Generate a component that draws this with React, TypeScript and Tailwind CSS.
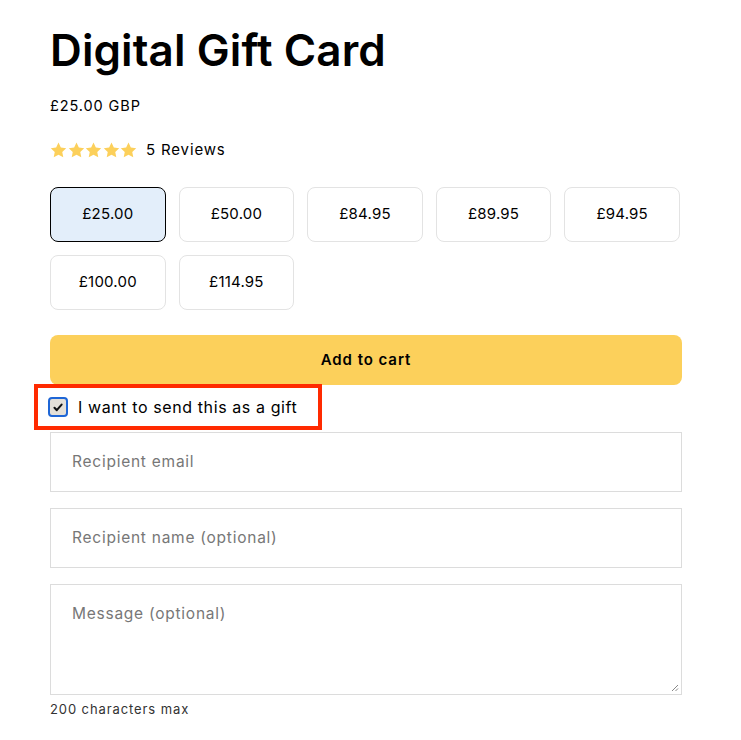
import React from "react";

const amounts = ["£25.00", "£50.00", "£84.95", "£89.95", "£94.95", "£100.00", "£114.95"];

function Star() {
  return (
    <svg width="17" height="16" viewBox="0 0 24 23" className="block">
      <path d="M12 0.8l3.35 7.1 7.75 1-5.7 5.35 1.45 7.7L12 18.2l-6.85 3.75 1.45-7.7L0.9 8.9l7.75-1z" fill="#fcd05b" />
    </svg>
  );
}

export default function App() {
  return (
    <div
      className="w-[741px] min-h-[740px] bg-white text-black pl-[50px] pt-[24px]"
      style={{ fontFamily: "Inter, 'Noto Sans', sans-serif" }}
    >
      <div className="w-[632px] flex flex-col">
        <h1 className="text-[44px] leading-[53px] font-semibold tracking-[0.1px]">Digital Gift Card</h1>
        <p className="mt-[19px] text-[14.5px] leading-[20px] tracking-[0.9px]">£25.00 GBP</p>
        <div className="mt-[24px] flex items-center h-[20px]">
          <div className="flex gap-[0.5px]">
            <Star />
            <Star />
            <Star />
            <Star />
            <Star />
          </div>
          <span className="ml-[9px] text-[15px] tracking-[0.85px]">5 Reviews</span>
        </div>
        <div className="mt-[27px] grid grid-cols-5 gap-x-[13px] gap-y-[13px] w-[630px]">
          {amounts.map((a, i) => (
            <button
              key={a}
              className={
                i === 0
                  ? "h-[55px] rounded-[8px] border border-black bg-[#e3eefa] text-[15px] tracking-[0.2px]"
                  : "h-[55px] rounded-[8px] border border-[#e3e3e3] bg-white text-[15px] tracking-[0.2px]"
              }
            >
              {a}
            </button>
          ))}
        </div>
        <button className="mt-[25px] h-[50px] w-[632px] rounded-[8px] bg-[#fcd05b] text-[15px] font-semibold tracking-[0.95px]">
          Add to cart
        </button>
        <div className="relative mt-[-1px] ml-[-16px] w-[288px] h-[46px] border-4 border-[#ff2a00] flex items-center pl-[10px]">
          <span className="w-[20px] h-[20px] rounded-[4px] border-2 border-[#1e66d6] bg-[#e4e0d8] flex items-center justify-center">
            <svg width="10" height="9" viewBox="0 0 10 9">
              <path d="M1.5 4.8l2.3 2.4L8.6 1.6" stroke="#111" strokeWidth="2" fill="none" strokeLinecap="round" strokeLinejoin="round" />
            </svg>
          </span>
          <span className="ml-[10px] text-[16px] tracking-[0.6px]">I want to send this as a gift</span>
        </div>
        <div className="mt-[2px] h-[60px] border border-[#dcdcdc] flex items-center pl-[21px] text-[15.5px] text-[#777] tracking-[0.75px]">
          Recipient email
        </div>
        <div className="mt-[16px] h-[60px] border border-[#dcdcdc] flex items-center pl-[21px] text-[15.5px] text-[#777] tracking-[0.75px]">
          Recipient name (optional)
        </div>
        <div className="relative mt-[16px] h-[111px] border border-[#dcdcdc] pl-[21px] pt-[19px] text-[15.5px] leading-[20px] text-[#777] tracking-[0.75px]">
          Message (optional)
          <svg width="8" height="8" viewBox="0 0 8 8" className="absolute right-[2px] bottom-[2px]">
            <path d="M7 1L1 7M7 4.5L4.5 7" stroke="#888" strokeWidth="1" />
          </svg>
        </div>
        <p className="mt-[6px] text-[13px] leading-[16px] text-[#333] tracking-[0.9px]">200 characters max</p>
      </div>
    </div>
  );
}
